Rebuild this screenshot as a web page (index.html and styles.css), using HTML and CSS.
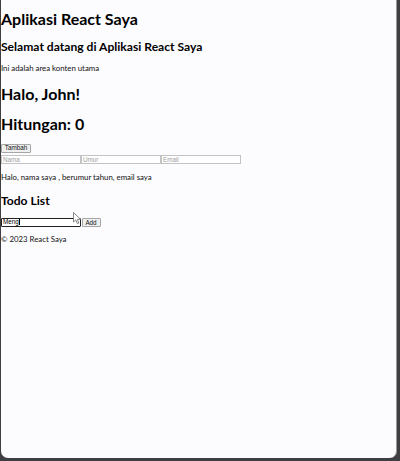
FILE: index.html
```html
<!DOCTYPE html>
<html lang="id">
<head>
<meta charset="utf-8">
<title>Aplikasi React Saya</title>
<link rel="stylesheet" href="styles.css">
</head>
<body>
<div class="window">
  <div class="app">
    <header class="app-header">
      <h1 class="heading heading--title">Aplikasi React Saya</h1>
    </header>
    <main class="app-main">
      <h2 class="subheading subheading--welcome">Selamat datang di Aplikasi React Saya</h2>
      <p class="text text--intro">Ini adalah area konten utama</p>
      <div class="greeting">
        <h1 class="heading heading--greet">Halo, John!</h1>
      </div>
      <div class="counter">
        <h1 class="heading heading--count">Hitungan: 0</h1>
        <button class="btn btn--count" type="button">Tambah</button>
      </div>
      <div class="profile">
        <div class="profile-fields">
          <input class="field" type="text" placeholder="Nama">
          <input class="field" type="text" placeholder="Umur">
          <input class="field" type="text" placeholder="Email">
        </div>
        <p class="text text--info">Halo, nama saya , berumur tahun, email saya</p>
      </div>
      <div class="todo">
        <h2 class="subheading subheading--todo">Todo List</h2>
        <div class="todo-form">
          <span class="field field--focus">Meng<span class="caret"></span></span>
          <button class="btn btn--add" type="button">Add</button>
        </div>
      </div>
    </main>
    <footer class="app-footer">
      <p class="text text--footer">© 2023 React Saya</p>
    </footer>
  </div>
  <svg class="pointer" width="9" height="13" viewBox="0 0 9 13" aria-hidden="true">
    <path d="M0.5 0.5 L0.5 10 L2.8 7.9 L4.4 11.6 L5.9 11 L4.4 7.4 L7.6 7.4 Z" fill="#ffffff" stroke="#6a6a6a" stroke-width="0.8" stroke-linejoin="round"/>
  </svg>
</div>
</body>
</html>
```

FILE: styles.css
```css
html {
  background: #3f3f41;
}

body {
  margin: 0;
  height: 461px;
  overflow: hidden;
  font-family: "Lato", "Open Sans", sans-serif;
  color: #000;
}

.window {
  position: relative;
  margin-left: 1px;
  width: 395px;
  height: 458px;
  background: #fcfbfe;
  border-right: 1px solid #9b9b9e;
  border-radius: 0 0 7px 7px;
  display: flow-root;
}

.app {
  display: flow-root;
}

.heading {
  margin: 0;
  font-size: 16px;
  line-height: 20px;
  font-weight: 700;
}

.heading--title { margin-top: 9px; }
.heading--greet { margin-top: 11px; }
.heading--count { margin-top: 10px; }

.subheading {
  margin: 0;
  font-size: 12.1px;
  line-height: 15px;
  font-weight: 700;
}

.subheading--welcome { margin-top: 9.6px; }
.subheading--todo { margin-top: 10.4px; }

.text {
  margin: 0;
  font-size: 7.8px;
  line-height: 10px;
  color: #111;
}

.text--intro { margin-top: 9.5px; }
.text--info { margin-top: 8.7px; }
.text--footer { margin-top: 7px; }

.btn {
  display: block;
  box-sizing: border-box;
  margin: 0;
  padding: 0 2px;
  height: 8.5px;
  font-family: "Liberation Sans", Arial, sans-serif;
  font-size: 6.3px;
  line-height: 6.5px;
  color: #111;
  background: #efefef;
  border: 1px solid #a6a6a6;
  border-radius: 1px;
}

.btn--count {
  margin-top: 10.2px;
  width: 30px;
}

.btn--add {
  width: 19px;
  height: 9px;
}

.profile-fields {
  display: flex;
  margin-top: 2.3px;
}

.field {
  box-sizing: border-box;
  display: block;
  width: 80px;
  height: 8.5px;
  margin: 0;
  padding: 0 1px;
  font-family: "Liberation Sans", Arial, sans-serif;
  font-size: 6.3px;
  line-height: 6.5px;
  color: #000;
  background: #fff;
  border: 1px solid #c3c3c6;
  border-radius: 0;
  outline: none;
}

.field::placeholder {
  color: #9d9d9d;
}

.todo-form {
  display: flex;
  align-items: flex-start;
  margin-top: 10.6px;
}

.field--focus {
  height: 9px;
  border: 1.5px solid #202020;
  border-radius: 1px;
  line-height: 6px;
  margin-right: 0.5px;
}

.caret {
  display: inline-block;
  width: 0.6px;
  height: 6px;
  margin-left: 0.3px;
  vertical-align: top;
  background: #000;
}

.pointer {
  position: absolute;
  left: 72px;
  top: 212px;
}
```
